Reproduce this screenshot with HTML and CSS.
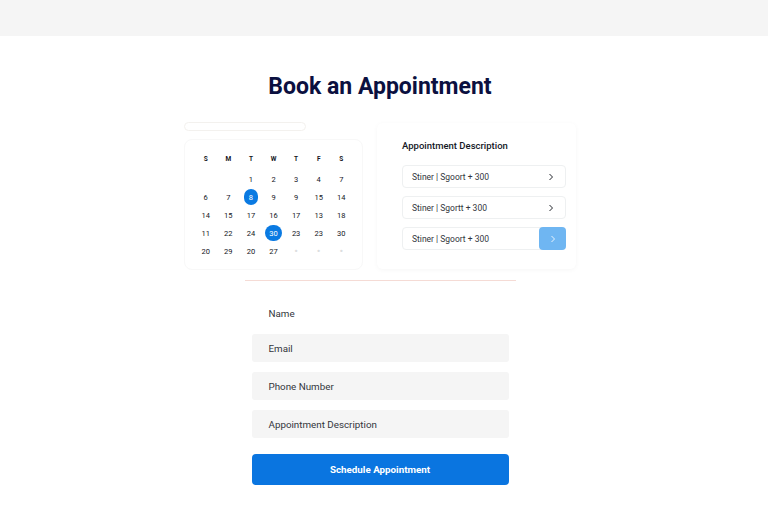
FILE: index.html
```html
<!DOCTYPE html>
<html lang="en">
<head>
    <meta charset="UTF-8">
    <meta name="viewport" content="width=device-width, initial-scale=1.0">
    <title>Book an Appointment</title>
    <link rel="stylesheet" href="styles.css">
</head>
<body>
    <header class="top-bar"></header>

    <main class="page">
        <h1>Book an Appointment</h1>

        <div class="widgets">
            <div class="calendar-col">
                <div class="search-bar"></div>
                <div class="calendar">
                    <span class="head">S</span><span class="head">M</span><span class="head">T</span><span class="head">W</span><span class="head">T</span><span class="head">F</span><span class="head">S</span>

                    <span></span><span></span><span>1</span><span>2</span><span>3</span><span>4</span><span>7</span>
                    <span>6</span><span>7</span><span class="picked small">8</span><span>9</span><span>9</span><span>15</span><span>14</span>
                    <span>14</span><span>15</span><span>17</span><span>16</span><span>17</span><span>13</span><span>18</span>
                    <span>11</span><span>22</span><span>24</span><span class="picked wide">30</span><span>23</span><span>23</span><span>30</span>
                    <span>20</span><span>29</span><span>20</span><span>27</span><span class="muted">•</span><span class="muted">•</span><span class="muted">•</span>
                </div>
            </div>

            <div class="slots">
                <h2>Appointment Description</h2>
                <div class="slot">
                    <span>Stiner | Sgoort + 300</span>
                    <svg class="chevron" viewBox="0 0 6 8"><path d="M1.5 1 4.5 4 1.5 7"/></svg>
                </div>
                <div class="slot">
                    <span>Stiner | Sgortt + 300</span>
                    <svg class="chevron" viewBox="0 0 6 8"><path d="M1.5 1 4.5 4 1.5 7"/></svg>
                </div>
                <div class="slot">
                    <span>Stiner | Sgoort + 300</span>
                    <div class="slot-btn">
                        <svg class="chevron" viewBox="0 0 6 8"><path d="M1.5 1 4.5 4 1.5 7"/></svg>
                    </div>
                </div>
            </div>
        </div>

        <hr class="divider">

        <form class="form">
            <div class="field plain">Name</div>
            <div class="field">Email</div>
            <div class="field">Phone Number</div>
            <div class="field">Appointment Description</div>
            <button type="button">Schedule Appointment</button>
        </form>
    </main>
</body>
</html>
```

FILE: styles.css
```css
* {
    box-sizing: border-box;
}

body {
    margin: 0;
    background: white;
    font-family: Roboto, "Liberation Sans", sans-serif;
    color: #1c1f2b;
}

.top-bar {
    height: 36px;
    background: #f5f5f5;
}

.page {
    width: 760px;
    display: flex;
    flex-direction: column;
    align-items: center;
}

h1 {
    margin: 36px 0 0;
    font-size: 23px;
    line-height: 30px;
    font-weight: 700;
    color: #0b1040;
}

.widgets {
    display: flex;
    gap: 14px;
    width: 392px;
    margin-top: 20px;
    align-items: flex-start;
}

/* Calendar */
.calendar-col {
    width: 179px;
}

.search-bar {
    width: 122px;
    height: 9px;
    border: 1px solid #f3f1ee;
    border-radius: 5px;
}

.calendar {
    display: grid;
    grid-template-columns: repeat(7, 22.6px);
    grid-template-rows: 23px repeat(5, 18px);
    justify-content: center;
    justify-items: center;
    align-items: center;
    height: 131px;
    margin-top: 8px;
    padding-top: 7px;
    border: 1px solid #f8f8f8;
    border-radius: 8px;
    font-size: 7.5px;
    font-weight: 400;
    color: #14161d;
}

.head {
    font-weight: 700;
    font-size: 6.5px;
}

.picked {
    display: flex;
    align-items: center;
    justify-content: center;
    height: 16px;
    color: white;
    background: #0a7ae2;
    border-radius: 8px;
}

.picked.small {
    width: 14px;
    border-radius: 7px;
}

.picked.wide {
    width: 17px;
}

.muted {
    font-size: 11px;
    color: #dcdee0;
}

/* Slots */
.slots {
    width: 199px;
    height: 146px;
    margin-top: 1px;
    padding: 16px 10px 0 25px;
    border-radius: 6px;
    box-shadow: 0 1px 5px rgba(0, 0, 0, 0.04);
}

h2 {
    margin: 0 0 13px;
    font-size: 9.5px;
    line-height: 13px;
    font-weight: 500;
    color: #14171f;
}

.slot {
    display: flex;
    align-items: center;
    justify-content: space-between;
    height: 23px;
    margin-bottom: 8px;
    padding-left: 9px;
    font-size: 8.5px;
    color: #33363d;
    border: 1px solid #eef0f1;
    border-radius: 4px;
}

.chevron {
    width: 6px;
    height: 8px;
    margin-right: 11px;
    fill: none;
    stroke: #23262d;
    stroke-width: 1;
}

.slot-btn {
    display: flex;
    align-items: center;
    justify-content: center;
    width: 27px;
    height: 23px;
    margin-right: -1px;
    background: #6fb6f2;
    border-radius: 4px;
}

.slot-btn .chevron {
    margin: 0;
    stroke: #e8f4fe;
}

.divider {
    width: 271px;
    height: 1px;
    margin: 10px 0 0;
    border: none;
    background: #f5dbd5;
}

/* Form */
.form {
    display: flex;
    flex-direction: column;
    width: 257px;
    gap: 10px;
    margin-top: 19px;
}

.field {
    height: 28px;
    padding-left: 17px;
    display: flex;
    align-items: center;
    font-size: 9.8px;
    color: #33363c;
    background: #f5f5f5;
    border-radius: 3px;
}

.field.plain {
    height: 27px;
    margin-bottom: -3px;
    background: none;
}

button {
    height: 31px;
    margin-top: 6px;
    color: white;
    background: #0a75e0;
    border: none;
    border-radius: 4px;
    font-family: inherit;
    font-size: 9.8px;
    font-weight: 700;
}
```
